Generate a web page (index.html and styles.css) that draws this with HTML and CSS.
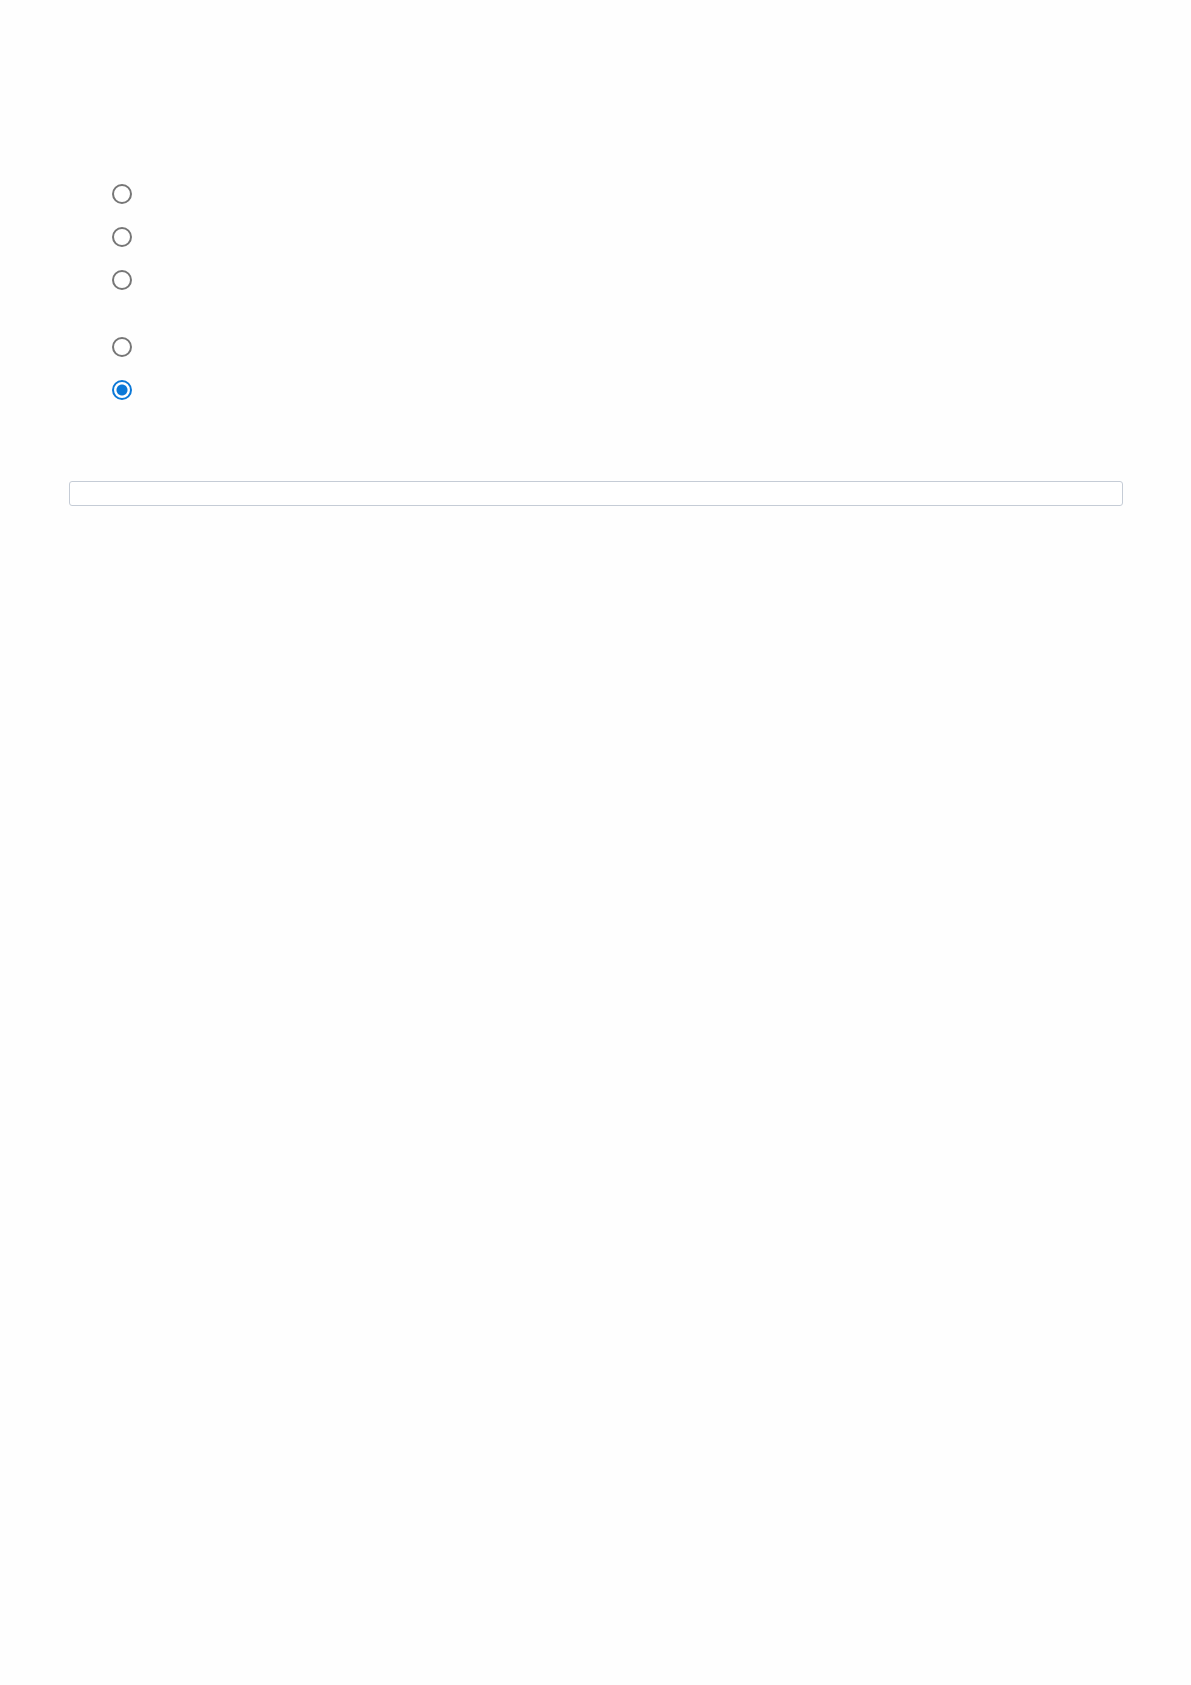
FILE: index.html
```html
<!DOCTYPE html>
<html>
<head>
<meta name="viewport" content="width=device-width, initial-scale=1">
<title>Options</title>
<link rel="stylesheet" href="styles.css">
</head>
<body>

<div class="container">
  <form id="optionsForm">
    <ul class="choices">
      <li class="choice"><input type="radio" name="opt" value="1"></li>
      <li class="choice"><input type="radio" name="opt" value="2"></li>
      <li class="choice tall"><input type="radio" name="opt" value="3"></li>
      <li class="choice"><input type="radio" name="opt" value="4"></li>
      <li class="choice"><input type="radio" name="opt" value="5" checked></li>
    </ul>

    <input type="text" class="answer" name="answer">
  </form>
</div>

</body>
</html>
```

FILE: styles.css
```css
body {
  font-family: Arial, Helvetica, sans-serif;
  background-color: #fefefe;
  margin: 0;
}
* {
  box-sizing: border-box;
}

.container {
  padding: 184px 68px 0 69px;
}

.choices {
  list-style: none;
  margin: 0;
  padding: 0 0 0 43px;
}

.choice {
  height: 43px;
  display: flex;
  align-items: flex-start;
}

.choice.tall {
  height: 67px;
}

input[type=radio] {
  appearance: none;
  -webkit-appearance: none;
  width: 20px;
  height: 20px;
  margin: 0;
  border: 2px solid #767676;
  border-radius: 50%;
  background: white;
  cursor: pointer;
}

input[type=radio]:checked {
  border-color: #0b78d7;
  background: radial-gradient(circle, #0b78d7 0 5px, white 6px);
}

input[type=text] {
  display: block;
  width: 1054px;
  height: 25px;
  margin: 58px 0 0 0;
  border: 1px solid #c5ccd6;
  border-radius: 3px;
  background-color: white;
}
```
